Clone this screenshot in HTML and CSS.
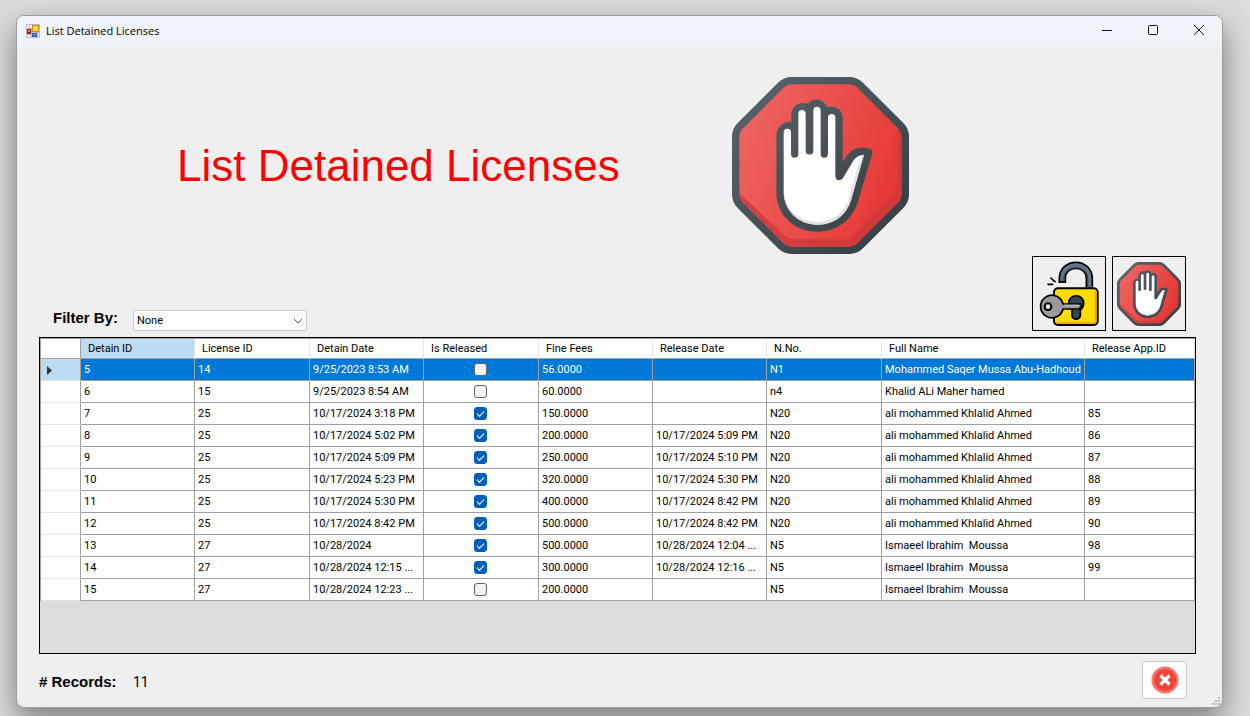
FILE: index.html
```html
<!DOCTYPE html>
<html lang="en">
<head>
<meta charset="utf-8">
<title>List Detained Licenses</title>
<link rel="stylesheet" href="styles.css">
</head>
<body>
<svg class="defs" aria-hidden="true">
  <defs>
    <linearGradient id="red" x1="0" y1="0.3" x2="1" y2="0.7"><stop offset="0" stop-color="#ee6360"/><stop offset="1" stop-color="#e53734"/></linearGradient>
    <linearGradient id="slate" x1="0" y1="0" x2="1" y2="1"><stop offset="0" stop-color="#5a666b"/><stop offset="1" stop-color="#303c42"/></linearGradient>
    <linearGradient id="slate-hand" gradientUnits="userSpaceOnUse" x1="36" y1="36" x2="567" y2="567"><stop offset="0" stop-color="#5a666b"/><stop offset="1" stop-color="#303c42"/></linearGradient>
    <symbol id="stop" viewBox="36 36 531 531">
      <path fill="url(#slate)" d="M215 36H388Q412 36 429 53L550 174Q567 191 567 215V388Q567 412 550 429L429 550Q412 567 388 567H215Q191 567 174 550L53 429Q36 412 36 388V215Q36 191 53 174L174 53Q191 36 215 36Z"/>
      <path fill="url(#red)" d="M218 58H385Q402 58 414 70L533 189Q545 201 545 218V385Q545 402 533 414L414 533Q402 545 385 545H218Q201 545 189 533L70 414Q58 402 58 385V218Q58 201 70 189L189 70Q201 58 218 58Z"/>
      <path fill="#c93a39" opacity=".75" d="M58 385Q58 402 70 414L189 533Q201 545 218 545H385Q402 545 414 533L533 414Q545 402 545 385V218Q545 207 533 195V365Q533 376 524 385L398 511Q386 523 371 523H222Q205 523 193 511L74 400Q66 392 58 385Z"/>
      <path fill="url(#slate-hand)" d="M169 214C169 187 188 169 214 170V148C215 122 240 108 264 116C278 98 308 98 322 127C346 121 368 134 368 158V292L382 271C398 248 425 242 451 252Q459 256 457 265L416 403C400 462 354 500 293 500C222 500 169 450 169 380Z"/>
      <path fill="#fff" d="M191 203Q191 191 202 191Q213 191 213 203V267A11 11 0 0 0 235 267V148Q235 135 246 135Q257 135 257 148V257A11 11 0 0 0 280 257V138Q280 125 291 125Q302 125 302 138V267A11 11 0 0 0 324 267V158Q324 147 335 147Q346 147 346 158V333C346 347 361 350 369 339L400 287Q410 270 432 269L394 402C381 448 345 479 293 479C235 479 191 437 191 378Z"/>
      <path fill="#dfe1e1" d="M191 378C191 437 235 479 293 479C345 479 381 448 394 402L432 269L424 270L388 395C375 442 342 470 293 470C238 470 196 437 191 378Z"/>
    </symbol>
    <symbol id="unlock" viewBox="60 48 180 198">
      <path fill="none" stroke="#000" stroke-width="23" d="M130 114V101C130 48 211 48 211 101V134"/>
      <path fill="none" stroke="#667784" stroke-width="13" d="M130 108V101C130 48 211 48 211 101V134"/>
      <path fill="none" stroke="#34444f" stroke-width="4" d="M135 108V101C135 57 206 57 206 101V134"/>
      <rect x="105" y="130" width="131" height="110" rx="12" fill="#ffdc00" stroke="#000" stroke-width="6"/>
      <path fill="none" stroke="#edb000" stroke-width="6" d="M230 138V227Q230 234 223 234H112"/>
      <path fill="#34444f" stroke="#000" stroke-width="5" d="M149 174C149 145 194 145 194 174Q194 188 184 195V213A13 13 0 0 1 159 213V195Q149 188 149 174Z"/>
      <path fill="#9b9b9b" stroke="#000" stroke-width="5" stroke-linejoin="round" d="M132 177H187V184L180 192H132A34 34 0 1 1 132 177Z"/>
      <path fill="none" stroke="#bbb" stroke-width="4" d="M135 181H180"/>
      <circle cx="87" cy="185" r="10" fill="#eee" stroke="#000" stroke-width="6"/>
      <path fill="none" stroke="#000" stroke-width="5" stroke-linecap="round" d="M87 118H101M96 99L104 107M106 108L108 110"/>
    </symbol>
  </defs>
</svg>

<main class="window">
  <header class="titlebar">
    <svg class="app-icon" viewBox="0 0 14 14" aria-hidden="true">
      <path fill="#bcbcc0" d="M0 0H14V14H0Z"/>
      <path fill="#f2f4f8" d="M1 1H3V4H1ZM4 1H6V4H4ZM1 11H5V13H1ZM12 9H13V13H12Z"/>
      <path fill="#b11717" d="M1 5H5V10H1Z"/><path fill="#e88" d="M2 6H4V8H2Z"/>
      <path fill="#c48c00" d="M6 1H13V8H6Z"/><path fill="#ffd95a" d="M7 2H12V7H7Z"/>
      <path fill="#2f62c4" d="M6 9H11V13H6Z"/><path fill="#78a7f2" d="M7 10H10V11H7Z"/>
    </svg>
    <span class="window-title">List Detained Licenses</span>
    <div class="window-controls">
      <button class="win-btn" aria-label="Minimize"><svg viewBox="0 0 12 12"><path d="M1 5.500H11"/></svg></button>
      <button class="win-btn" aria-label="Maximize"><svg viewBox="0 0 12 12"><rect x="1.500" y="0.500" width="9" height="9" rx="1"/></svg></button>
      <button class="win-btn" aria-label="Close"><svg viewBox="0 0 12 12"><path d="M1 0L11 10M11 0L1 10"/></svg></button>
    </div>
  </header>

  <section class="hero">
    <h1>List Detained Licenses</h1>
    <svg class="hero-icon" aria-hidden="true"><use href="#stop"/></svg>
  </section>

  <section class="toolbar">
    <label class="filter-label" for="filter">Filter By:</label>
    <div class="select-box">
      <select id="filter"><option>None</option></select>
      <svg class="chevron" viewBox="0 0 10 6" aria-hidden="true"><path d="M1 1L5 5L9 1"/></svg>
    </div>
    <div class="actions">
      <button class="action" aria-label="Release license"><svg class="unlock-icon"><use href="#unlock"/></svg></button>
      <button class="action" aria-label="Detain license"><svg class="stop-icon"><use href="#stop"/></svg></button>
    </div>
  </section>

  <section class="grid">
    <table>
      <colgroup><col class="c-head"><col class="c-a"><col class="c-b"><col class="c-a"><col class="c-b"><col class="c-a"><col class="c-a"><col class="c-b"><col><col class="c-app"></colgroup>
      <thead>
        <tr><th></th><th class="sorted">Detain ID</th><th>License ID</th><th>Detain Date</th><th>Is Released</th><th>Fine Fees</th><th>Release Date</th><th>N.No.</th><th>Full Name</th><th>Release App.ID</th></tr>
      </thead>
      <tbody>
        <tr class="selected"><th><svg class="marker" viewBox="0 0 5 9" aria-label="Current row"><path d="M0 0L5 4.500L0 9Z"/></svg></th><td>5</td><td>14</td><td>9/25/2023 8:53 AM</td><td class="check"><input type="checkbox" aria-label="Released"></td><td>56.0000</td><td></td><td>N1</td><td>Mohammed Saqer Mussa Abu-Hadhoud</td><td></td></tr>
        <tr><th></th><td>6</td><td>15</td><td>9/25/2023 8:54 AM</td><td class="check"><input type="checkbox" aria-label="Released"></td><td>60.0000</td><td></td><td>n4</td><td>Khalid ALi Maher hamed</td><td></td></tr>
        <tr><th></th><td>7</td><td>25</td><td>10/17/2024 3:18 PM</td><td class="check"><input type="checkbox" aria-label="Released" checked></td><td>150.0000</td><td></td><td>N20</td><td>ali mohammed Khlalid Ahmed</td><td>85</td></tr>
        <tr><th></th><td>8</td><td>25</td><td>10/17/2024 5:02 PM</td><td class="check"><input type="checkbox" aria-label="Released" checked></td><td>200.0000</td><td>10/17/2024 5:09 PM</td><td>N20</td><td>ali mohammed Khlalid Ahmed</td><td>86</td></tr>
        <tr><th></th><td>9</td><td>25</td><td>10/17/2024 5:09 PM</td><td class="check"><input type="checkbox" aria-label="Released" checked></td><td>250.0000</td><td>10/17/2024 5:10 PM</td><td>N20</td><td>ali mohammed Khlalid Ahmed</td><td>87</td></tr>
        <tr><th></th><td>10</td><td>25</td><td>10/17/2024 5:23 PM</td><td class="check"><input type="checkbox" aria-label="Released" checked></td><td>320.0000</td><td>10/17/2024 5:30 PM</td><td>N20</td><td>ali mohammed Khlalid Ahmed</td><td>88</td></tr>
        <tr><th></th><td>11</td><td>25</td><td>10/17/2024 5:30 PM</td><td class="check"><input type="checkbox" aria-label="Released" checked></td><td>400.0000</td><td>10/17/2024 8:42 PM</td><td>N20</td><td>ali mohammed Khlalid Ahmed</td><td>89</td></tr>
        <tr><th></th><td>12</td><td>25</td><td>10/17/2024 8:42 PM</td><td class="check"><input type="checkbox" aria-label="Released" checked></td><td>500.0000</td><td>10/17/2024 8:42 PM</td><td>N20</td><td>ali mohammed Khlalid Ahmed</td><td>90</td></tr>
        <tr><th></th><td>13</td><td>27</td><td>10/28/2024</td><td class="check"><input type="checkbox" aria-label="Released" checked></td><td>500.0000</td><td>10/28/2024 12:04 ...</td><td>N5</td><td>Ismaeel Ibrahim  Moussa</td><td>98</td></tr>
        <tr><th></th><td>14</td><td>27</td><td>10/28/2024 12:15 ...</td><td class="check"><input type="checkbox" aria-label="Released" checked></td><td>300.0000</td><td>10/28/2024 12:16 ...</td><td>N5</td><td>Ismaeel Ibrahim  Moussa</td><td>99</td></tr>
        <tr><th></th><td>15</td><td>27</td><td>10/28/2024 12:23 ...</td><td class="check"><input type="checkbox" aria-label="Released"></td><td>200.0000</td><td></td><td>N5</td><td>Ismaeel Ibrahim  Moussa</td><td></td></tr>
      </tbody>
    </table>
  </section>

  <footer class="footer">
    <span class="records-label"># Records:</span>
    <span class="records-count">11</span>
    <button class="close-btn" aria-label="Close form">
      <svg viewBox="0 0 28 28"><circle cx="14" cy="14" r="13.500" fill="#f8746b"/><circle cx="14" cy="14" r="11" fill="#ef4438"/><path d="M9.500 9.500L18.500 18.500M18.500 9.500L9.500 18.500" stroke="#fff" stroke-width="3.200"/></svg>
    </button>
  </footer>
  <svg class="grip" viewBox="0 0 8 8" aria-hidden="true"><path d="M6 0H8V2H6ZM3 3H5V5H3ZM6 3H8V5H6ZM0 6H2V8H0ZM3 6H5V8H3ZM6 6H8V8H6Z"/></svg>
</main>
</body>
</html>
```
FILE: styles.css
```css
* { box-sizing: border-box; }

body {
  margin: 0;
  min-height: 100vh;
  display: flex;
  padding: 15px 27px 8px 16px;
  background: #dcdcdc;
  font-family: Roboto, "Liberation Sans", Arial, sans-serif;
  font-size: 11px;
  color: #000;
  overflow: hidden;
}

button { padding: 0; font: inherit; }
svg { display: block; }
.defs { position: absolute; width: 0; height: 0; }

.window {
  flex: 1;
  min-width: 0;
  display: flex;
  flex-direction: column;
  position: relative;
  background: #efefef;
  border: 1px solid #9d9d9d;
  border-radius: 8px;
  box-shadow: 0 12px 30px rgba(0, 0, 0, 0.45);
}

.titlebar {
  display: flex;
  align-items: center;
  height: 30px;
  padding-left: 9px;
  background: #eff3fa;
  border-radius: 7px 7px 0 0;
}
.app-icon { width: 14px; height: 14px; }
.window-title {
  margin-left: 6px;
  padding-bottom: 2px;
  font-family: "Open Sans", "Noto Sans", sans-serif;
  font-size: 11px;
}
.window-controls { display: flex; margin-left: auto; }
.win-btn {
  display: grid;
  place-items: center;
  width: 46px;
  height: 30px;
  background: none;
  border: 0;
}
.win-btn svg {
  width: 12px;
  height: 12px;
  fill: none;
  stroke: #111;
}

.hero {
  display: flex;
  align-items: center;
  gap: 112px;
  padding: 31px 0 2px 160px;
}
.hero h1 {
  margin: 0;
  font-family: "Liberation Sans", Arial, sans-serif;
  font-size: 44px;
  font-weight: 400;
  line-height: 50px;
  color: #f00;
  white-space: nowrap;
}
.hero-icon { width: 177px; height: 177px; }

.toolbar {
  display: flex;
  align-items: flex-end;
  padding: 0 36px 6px 36px;
}
.filter-label,
.records-label {
  font-family: "Liberation Sans", Arial, sans-serif;
  font-size: 15px;
  font-weight: 700;
}
.filter-label { width: 80px; line-height: 26px; }
.select-box { display: grid; align-items: center; }
.select-box select,
.select-box .chevron { grid-area: 1 / 1; }
.select-box select {
  width: 174px;
  height: 21px;
  padding: 0 3px;
  appearance: none;
  background: #fdfdfd;
  border: 1px solid #ccc;
  border-radius: 2px;
  font: inherit;
  color: inherit;
}
.chevron {
  justify-self: end;
  width: 10px;
  height: 6px;
  margin-right: 4px;
  fill: none;
  stroke: #555;
  pointer-events: none;
}
.actions { display: flex; gap: 6px; margin-left: auto; }
.action {
  display: grid;
  place-items: center;
  width: 74px;
  height: 75px;
  background: #efefef;
  border: 1px solid #000;
}
.unlock-icon { width: 60px; height: 66px; }
.stop-icon { width: 64px; height: 64px; }

.grid {
  flex: 1;
  margin: 0 26px 0 22px;
  background: #dcdcdc;
  border: 1px solid #000;
}
table {
  width: 100%;
  table-layout: fixed;
  border-collapse: separate;
  border-spacing: 0;
  border-left: 1px solid #a0a0a0;
  border-top: 1px solid #a0a0a0;
}
.c-head { width: 40px; }
.c-a { width: 114px; }
.c-b { width: 115px; }
.c-app { width: 110px; }
th, td {
  padding: 1px 0 0 3px;
  height: 22px;
  background: #fff;
  border-right: 1px solid #a0a0a0;
  border-bottom: 1px solid #a0a0a0;
  font-weight: 400;
  text-align: left;
  line-height: 20px;
  white-space: pre;
  overflow: hidden;
}
thead th {
  height: 20px;
  padding-left: 7px;
  line-height: 18px;
  border-right-color: #e5e5e5;
}
thead th:first-child { border-right-color: #a0a0a0; }
thead .sorted { background: #bcdcf4; }
tbody th { border-bottom-color: #e5e5e5; padding-left: 6px; }
.selected td { background: #0078d7; color: #fff; }
.selected th { background: #bcdcf4; }
.marker { width: 5px; height: 9px; fill: #333; }

td.check { padding: 0 1px 0 0; }
.check input {
  display: grid;
  place-items: center;
  width: 13px;
  height: 13px;
  margin: 0 auto;
  appearance: none;
  background: #f3f3f3;
  border: 1px solid #626262;
  border-radius: 3px;
}
.check input:checked { background: #005fb8; border-color: #005fb8; }
.check input:checked::after {
  content: "";
  width: 6px;
  height: 3px;
  margin-bottom: 2px;
  border: solid #fff;
  border-width: 0 0 1px 1px;
  transform: rotate(-45deg);
}

.footer {
  display: flex;
  align-items: center;
  padding: 7px 35px 8px 22px;
}
.records-label { width: 94px; padding-top: 3px; }
.records-count { padding-top: 3px; font-size: 14px; }
.close-btn {
  display: grid;
  place-items: center;
  width: 45px;
  height: 38px;
  margin-left: auto;
  background: #fdfdfd;
  border: 1px solid #ccc;
  border-radius: 4px;
}
.close-btn svg { width: 28px; height: 28px; }
.grip {
  position: absolute;
  right: 2px;
  bottom: 2px;
  width: 8px;
  height: 8px;
  fill: #b9b9b9;
}
```
